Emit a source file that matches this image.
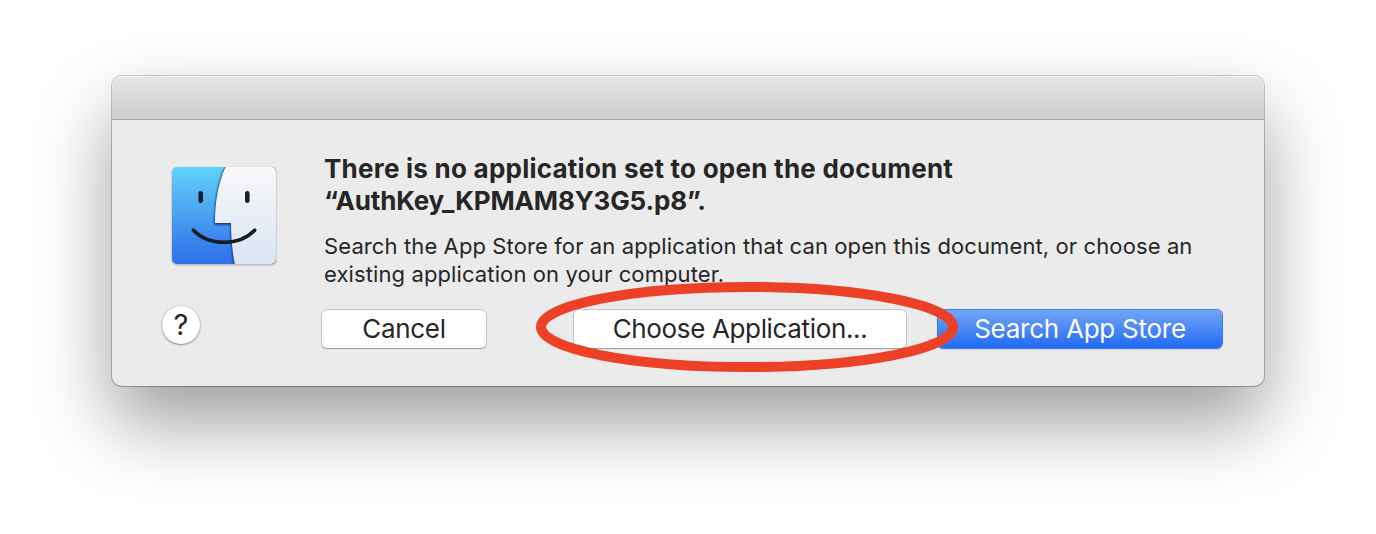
<template>
  <main class="desktop">
    <section class="dialog" role="alertdialog">
      <header class="titlebar"></header>
      <div class="content">
        <div class="message">
          <svg class="finder" viewBox="0 0 106 100" width="106" height="100">
            <defs>
              <linearGradient id="blue" x1="0" y1="0" x2="0" y2="1">
                <stop offset="0" stop-color="#62d3fa" />
                <stop offset="0.45" stop-color="#4ba5f3" />
                <stop offset="0.8" stop-color="#387fed" />
                <stop offset="1" stop-color="#316fe9" />
              </linearGradient>
              <linearGradient id="pale" x1="0" y1="0" x2="0" y2="1">
                <stop offset="0" stop-color="#f7f7f8" />
                <stop offset="1" stop-color="#dae5f2" />
              </linearGradient>
              <clipPath id="tile"><rect x="1" y="1" width="104" height="97" rx="5" /></clipPath>
              <filter id="soft" x="-20%" y="-20%" width="140%" height="140%"><feGaussianBlur stdDeviation="0.9" /></filter>
            </defs>
            <g clip-path="url(#tile)">
              <rect width="106" height="100" fill="url(#blue)" />
              <path d="M54.500 0C46.500 17 43.500 36 43.500 58.500H59.500C59.500 72 61 87 63.200 99H110V0Z" fill="#0c2c5e" filter="url(#soft)" />
              <path d="M55 0C47 17 44 36 44 57H60C60 72 61.500 87 64 99H110V0Z" fill="url(#pale)" />
            </g>
            <path d="M29.700 27.300V34.700M76.300 27.300V34.700" class="eye" />
            <path d="M22.300 64.200C38 80.300 68 80.300 83.700 64.200" class="smile" />
          </svg>
          <div class="copy">
            <h1><span class="lead">There is no application set to open the document</span><br /><span class="file">“AuthKey_KPMAM8Y3G5.p8”.</span></h1>
            <p>Search the App Store for an application that can open this document, or choose an<br />existing application on your computer.</p>
          </div>
        </div>
        <footer class="actions">
          <button class="help">?</button>
          <button class="button cancel">Cancel</button>
          <button class="button choose">Choose Application...</button>
          <button class="button primary">Search App Store</button>
        </footer>
      </div>
    </section>
    <svg class="ring" width="424" height="92" viewBox="0 0 424 92">
      <ellipse cx="212" cy="46" rx="206" ry="40" />
    </svg>
  </main>
</template>

<style>
body { background: #fff; overflow: hidden; }
</style>

<style scoped>
.desktop { position: relative; box-sizing: border-box; width: 1376px; height: 534px; padding: 76px 112px; overflow: hidden; font-family: Inter, "Liberation Sans", sans-serif; color: #262626; }
.dialog { width: 1152px; height: 310px; border-radius: 10px; background: #ebebeb; box-shadow: 0 0 0 1px rgba(0,0,0,.2), 0 1px 1px rgba(0,0,0,.12), 0 36px 76px rgba(0,0,0,.39); }
.titlebar { box-sizing: border-box; height: 44px; border-radius: 10px 10px 0 0; background: linear-gradient(#e6e6e6, #cdcdcd); border-bottom: 1px solid #a6a6a6; box-shadow: inset 0 1px 0 #f4f4f4; }
.content { padding: 33px 42px 0 50px; }
.message { display: flex; height: 157px; }
.finder { flex: none; margin: 13px 47px 0 9px; filter: drop-shadow(0 1px 1px rgba(0,0,0,.28)); }
.eye { stroke: #16212a; stroke-width: 4.6; stroke-linecap: round; fill: none; }
.smile { stroke: #151c24; stroke-width: 3.6; stroke-linecap: round; fill: none; }
.copy { white-space: nowrap; }
h1 { margin: 0; font-size: 26px; line-height: 32px; font-weight: 700; }
.lead { letter-spacing: .24px; }
.file { letter-spacing: -.14px; }
.copy p { margin: 15px 0 0; font-size: 22px; line-height: 28px; letter-spacing: .11px; }
.actions { display: flex; align-items: flex-start; }
button { padding: 0; border: 0; font: 400 26px/38px Inter, "Liberation Sans", sans-serif; color: #262626; background: #fff; white-space: nowrap; }
.help { width: 38px; height: 38px; border-radius: 50%; margin: -4px 122px 0 0; font-size: 29px; box-shadow: 0 0 0 1px rgba(0,0,0,.09), 0 1px 2px rgba(0,0,0,.35); }
.button { height: 38px; border-radius: 5px; box-shadow: 0 0 0 1px rgba(0,0,0,.15), 0 1px 1px rgba(0,0,0,.22); }
.cancel { width: 164px; margin-right: 88px; letter-spacing: -.3px; }
.choose { width: 332px; margin-right: 32px; letter-spacing: -.35px; }
.primary { width: 284px; color: #fff; letter-spacing: -.25px; background: linear-gradient(#74a5f5, #216af6); box-shadow: 0 0 0 1px #3f7df0, 0 1px 1px 1px rgba(0,0,0,.12); }
.ring { position: absolute; left: 535px; top: 281px; }
.ring ellipse { fill: none; stroke: #ec4127; stroke-width: 10; }
</style>
